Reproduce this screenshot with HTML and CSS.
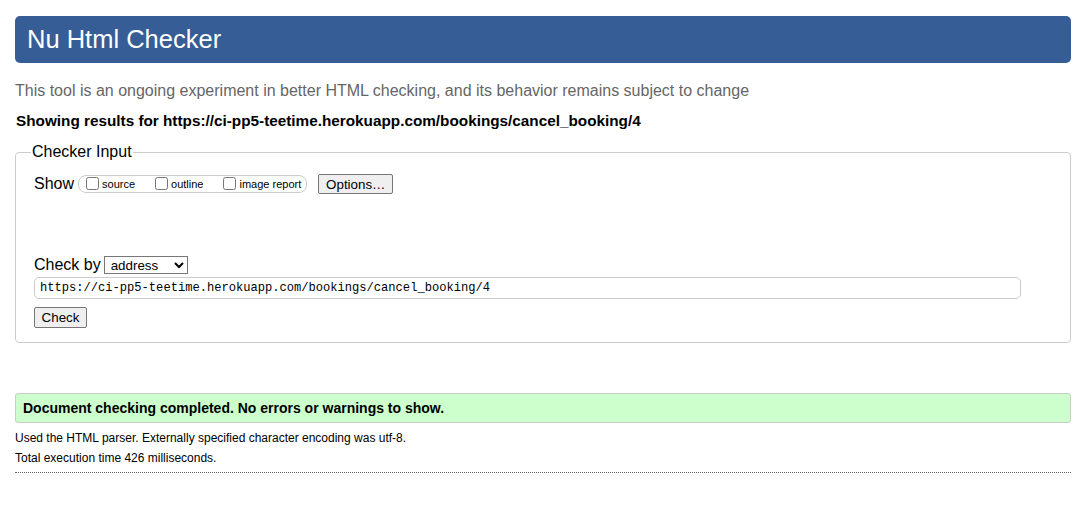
FILE: index.html
```html
<!DOCTYPE html>
<html lang="en">
<head>
<meta charset="utf-8">
<title>Nu Html Checker</title>
<link rel="stylesheet" href="styles.css">
</head>
<body>
<div class="page">
  <h1 class="banner">Nu Html Checker</h1>
  <p class="intro">This tool is an ongoing experiment in better HTML checking, and its behavior remains subject to change</p>
  <p class="showing">Showing results for https://ci-pp5-teetime.herokuapp.com/bookings/cancel_booking/4</p>
  <form class="checker">
    <fieldset class="box">
      <legend class="legend">Checker Input</legend>
      <div class="show-row">
        <span class="show-label">Show</span>
        <span class="opts">
          <label class="opt"><input type="checkbox" class="cb">source</label>
          <label class="opt"><input type="checkbox" class="cb">outline</label>
          <label class="opt"><input type="checkbox" class="cb">image report</label>
        </span>
        <button type="button" class="btn options">Options…</button>
      </div>
      <div class="by-row">
        <span class="by-label">Check by</span>
        <select class="sel"><option>address</option></select>
      </div>
      <input class="url" type="text" value="https://ci-pp5-teetime.herokuapp.com/bookings/cancel_booking/4">
      <div class="submit-row"><button type="button" class="btn check">Check</button></div>
    </fieldset>
  </form>
  <p class="success">Document checking completed. No errors or warnings to show.</p>
  <div class="meta-block">
    <p class="meta">Used the HTML parser. Externally specified character encoding was utf-8.</p>
    <p class="meta">Total execution time 426 milliseconds.</p>
  </div>
  <hr class="rule">
</div>
</body>
</html>
```
FILE: styles.css
```css
html, body {
  margin: 0;
  padding: 0;
  background: #fff;
}
body {
  font-family: "Liberation Sans", Arial, sans-serif;
  color: #000;
}
.page {
  padding: 16px 21px 0 15px;
}
.banner {
  margin: 0;
  height: 47px;
  box-sizing: border-box;
  display: flex;
  align-items: center;
  padding: 0 0 1px 12px;
  background: #365d95;
  color: #fff;
  border-radius: 5px;
  font-size: 25.5px;
  font-weight: normal;
}
.intro {
  margin: 19px 0 0;
  font-size: 16px;
  line-height: 18px;
  color: #666;
}
.showing {
  margin: 12px 0 0 1px;
  font-size: 15.3px;
  line-height: 18px;
  font-weight: bold;
}
.checker {
  margin: 13px 0 0;
}
.box {
  margin: 0;
  padding: 0 18px 14px;
  border: 1px solid #ccc;
  border-radius: 4px;
}
.legend {
  margin-left: -3px;
  padding: 0 1px;
  font-size: 16px;
  line-height: 18px;
}
.show-row {
  display: flex;
  align-items: center;
  margin-top: 12px;
  height: 22px;
}
.show-label {
  font-size: 16px;
}
.opts {
  display: flex;
  align-items: center;
  gap: 19px;
  margin-left: 4px;
  height: 18px;
  box-sizing: border-box;
  padding: 0 5px 0 6px;
  border: 1px solid #ccc;
  border-radius: 8px;
  font-size: 11px;
}
.opt {
  display: flex;
  align-items: center;
}
.cb {
  width: 13px;
  height: 13px;
  margin: 0 3px 2px 1px;
}
.btn {
  font-family: "Liberation Sans", Arial, sans-serif;
  font-size: 13.33px;
  background: #efefef;
  border: 1px solid #767676;
  border-radius: 2px;
  color: #000;
  padding: 0 6px;
  height: 20px;
  box-sizing: border-box;
}
.options {
  margin-left: 11px;
  width: 75px;
  height: 20px;
}
.by-row {
  display: flex;
  align-items: center;
  margin-top: 60px;
  height: 20px;
}
.by-label {
  font-size: 16px;
}
.sel {
  margin-left: 3px;
  width: 84px;
  height: 18px;
  font-family: "Liberation Sans", Arial, sans-serif;
  font-size: 13.33px;
  border: 1px solid #767676;
  border-radius: 0;
  background: #fff;
  padding: 0 0 0 2px;
}
.url {
  display: block;
  margin-top: 2px;
  width: 987px;
  height: 22px;
  box-sizing: border-box;
  border: 1px solid #ccc;
  border-radius: 5px;
  padding: 0 5px;
  font-family: "Liberation Mono", "DejaVu Sans Mono", monospace;
  font-size: 12.1px;
  color: #000;
}
.submit-row {
  margin-top: 8px;
}
.check {
  width: 53px;
  height: 21px;
}
.success {
  margin: 50px 0 0;
  height: 30px;
  box-sizing: border-box;
  display: flex;
  align-items: center;
  padding: 0 7px;
  background: #ccffcc;
  border: 1px solid #ccc;
  border-radius: 3px;
  font-size: 14px;
  font-weight: bold;
}
.meta-block {
  padding-top: 2px;
}
.meta {
  margin: 6px 0 0;
  font-size: 12px;
  line-height: 14px;
}
.rule {
  margin: 7px 0 0;
  border: 0;
  border-top: 1px dotted #666;
  height: 0;
}
```
